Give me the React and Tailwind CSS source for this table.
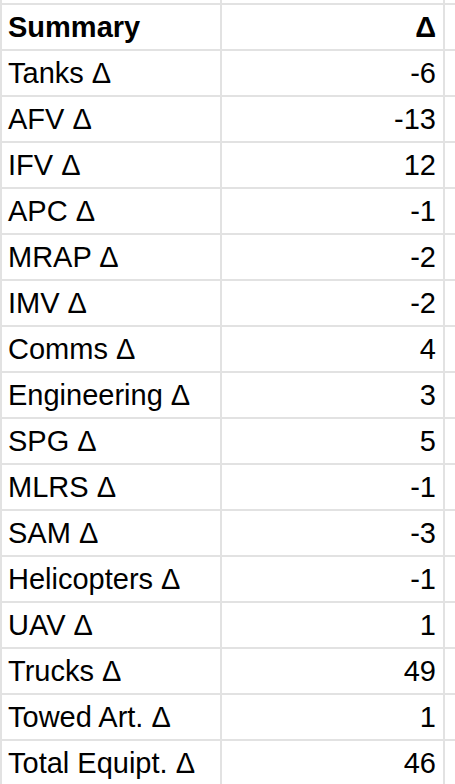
import React from 'react';

const rows = [
  ['Tanks Δ', '-6'],
  ['AFV Δ', '-13'],
  ['IFV Δ', '12'],
  ['APC Δ', '-1'],
  ['MRAP Δ', '-2'],
  ['IMV Δ', '-2'],
  ['Comms Δ', '4'],
  ['Engineering Δ', '3'],
  ['SPG Δ', '5'],
  ['MLRS Δ', '-1'],
  ['SAM Δ', '-3'],
  ['Helicopters Δ', '-1'],
  ['UAV Δ', '1'],
  ['Trucks Δ', '49'],
  ['Towed Art. Δ', '1'],
  ['Total Equipt. Δ', '46'],
];

const Row = ({ label, value, bold }) => (
  <div className="flex h-[46px] border-t-[2px] border-[#e2e2e2]">
    <div className={`w-[222px] shrink-0 border-l-[2px] border-r-[2px] border-[#e2e2e2] pl-[6px] flex items-center whitespace-nowrap ${bold ? 'font-bold' : ''}`}>
      {label}
    </div>
    <div className={`w-[223px] shrink-0 border-r-[2px] border-[#e2e2e2] pr-[7px] flex items-center justify-end ${bold ? 'font-bold' : ''}`}>
      {value}
    </div>
    <div className="flex-1" />
  </div>
);

export default function App() {
  return (
    <div className="w-[455px] h-[784px] overflow-hidden bg-white text-black text-[29px] leading-none" style={{ fontFamily: '"Liberation Sans", Arial, sans-serif' }}>
      <div className="flex h-[3px]">
        <div className="w-[222px] shrink-0 border-l-[2px] border-r-[2px] border-[#e2e2e2]" />
        <div className="w-[223px] shrink-0 border-r-[2px] border-[#e2e2e2]" />
      </div>
      <Row label="Summary" value="Δ" bold />
      {rows.map(([l, v]) => (
        <Row key={l} label={l} value={v} />
      ))}
    </div>
  );
}
